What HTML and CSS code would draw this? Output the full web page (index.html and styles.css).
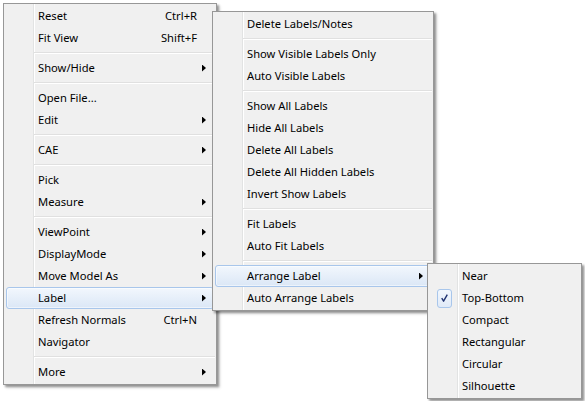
FILE: index.html
```html
<!DOCTYPE html>
<html>
<head>
<meta charset="utf-8">
<link rel="stylesheet" href="styles.css">
</head>
<body>
<div class="desk">
  <div class="menu m1">
    <div class="item"><span class="label">Reset</span><span class="key">Ctrl+R</span></div>
    <div class="item"><span class="label">Fit View</span><span class="key">Shift+F</span></div>
    <div class="sep"></div>
    <div class="item"><span class="label">Show/Hide</span><span class="arrow"></span></div>
    <div class="sep"></div>
    <div class="item"><span class="label">Open File...</span></div>
    <div class="item"><span class="label">Edit</span><span class="arrow"></span></div>
    <div class="sep"></div>
    <div class="item"><span class="label">CAE</span><span class="arrow"></span></div>
    <div class="sep"></div>
    <div class="item"><span class="label">Pick</span></div>
    <div class="item"><span class="label">Measure</span><span class="arrow"></span></div>
    <div class="sep"></div>
    <div class="item"><span class="label">ViewPoint</span><span class="arrow"></span></div>
    <div class="item"><span class="label">DisplayMode</span><span class="arrow"></span></div>
    <div class="item"><span class="label">Move Model As</span><span class="arrow"></span></div>
    <div class="item hl"><span class="label">Label</span><span class="arrow"></span></div>
    <div class="item"><span class="label">Refresh Normals</span><span class="key">Ctrl+N</span></div>
    <div class="item"><span class="label">Navigator</span></div>
    <div class="sep"></div>
    <div class="item"><span class="label">More</span><span class="arrow"></span></div>
  </div>

  <div class="menu m2">
    <div class="item"><span class="label">Delete Labels/Notes</span></div>
    <div class="sep"></div>
    <div class="item"><span class="label">Show Visible Labels Only</span></div>
    <div class="item"><span class="label">Auto Visible Labels</span></div>
    <div class="sep"></div>
    <div class="item"><span class="label">Show All Labels</span></div>
    <div class="item"><span class="label">Hide All Labels</span></div>
    <div class="item"><span class="label">Delete All Labels</span></div>
    <div class="item"><span class="label">Delete All Hidden Labels</span></div>
    <div class="item"><span class="label">Invert Show Labels</span></div>
    <div class="sep"></div>
    <div class="item"><span class="label">Fit Labels</span></div>
    <div class="item"><span class="label">Auto Fit Labels</span></div>
    <div class="sep"></div>
    <div class="item hl"><span class="label">Arrange Label</span><span class="arrow"></span></div>
    <div class="item"><span class="label">Auto Arrange Labels</span></div>
  </div>

  <div class="menu m3">
    <div class="item"><span class="label">Near</span></div>
    <div class="item checked">
      <span class="check"><svg width="14" height="18" viewBox="0 0 14 18"><path d="M4 9.2 L6 12.4 L10 5.4" stroke="#1f3170" stroke-width="1.5" fill="none" stroke-linejoin="round"/></svg></span>
      <span class="label">Top-Bottom</span>
    </div>
    <div class="item"><span class="label">Compact</span></div>
    <div class="item"><span class="label">Rectangular</span></div>
    <div class="item"><span class="label">Circular</span></div>
    <div class="item"><span class="label">Silhouette</span></div>
  </div>
</div>
</body>
</html>
```
FILE: styles.css
```css
html, body {
  margin: 0;
  padding: 0;
  background: #ffffff;
}

.desk {
  position: relative;
  width: 585px;
  height: 401px;
  overflow: hidden;
  font-family: "Noto Sans", "DejaVu Sans", sans-serif;
  font-size: 11.2px;
  color: #000;
}

.menu {
  position: absolute;
  box-sizing: border-box;
  display: flex;
  flex-direction: column;
  padding: 1px 0;
  border: 1px solid #979797;
  background:
    linear-gradient(to right, transparent 29px, #e2e3e3 29px, #e2e3e3 30px, #ffffff 30px, #ffffff 31px, transparent 31px),
    #f0f0f0;
  box-shadow: 2px 2px 2px rgba(0, 0, 0, 0.35), 3px 3px 3px rgba(0, 0, 0, 0.12);
}

.m1 { left: 3px; top: 3px; width: 214px; }
.m2 { left: 212px; top: 11px; width: 222px; }
.m3 { left: 427px; top: 263px; width: 155px; }

.item {
  position: relative;
  box-sizing: border-box;
  height: 22px;
  margin: 0 2px;
  display: flex;
  align-items: center;
  padding: 0 7px 2px 31px;
  border: 1px solid transparent;
  border-radius: 3px;
  white-space: nowrap;
}

.label { flex: 1; }

.key { margin-right: 9px; }

.arrow {
  width: 4px;
  height: 7px;
  margin-top: 2px;
  background: #000;
  clip-path: polygon(0 0, 100% 50%, 0 100%);
}

.hl {
  border-color: #a8c6eb;
  background: linear-gradient(to bottom, #f2f7fd, #dbe7f6);
  box-shadow: inset 0 0 0 1px rgba(255, 255, 255, 0.5);
}

.sep {
  height: 8px;
  margin: 0 1px 0 30px;
  background: linear-gradient(to bottom, transparent 3px, #e0e0e0 3px, #e0e0e0 4px, #ffffff 4px, #ffffff 5px, transparent 5px);
}

.checked { padding-left: 6px; }

.check {
  box-sizing: border-box;
  width: 15px;
  height: 19px;
  margin-top: 2px;
  margin-right: 10px;
  display: flex;
  align-items: center;
  justify-content: center;
  border: 1px solid #a8c6eb;
  border-radius: 3px;
  background: linear-gradient(to bottom, #f2f7fd, #e0eaf8);
}
```
